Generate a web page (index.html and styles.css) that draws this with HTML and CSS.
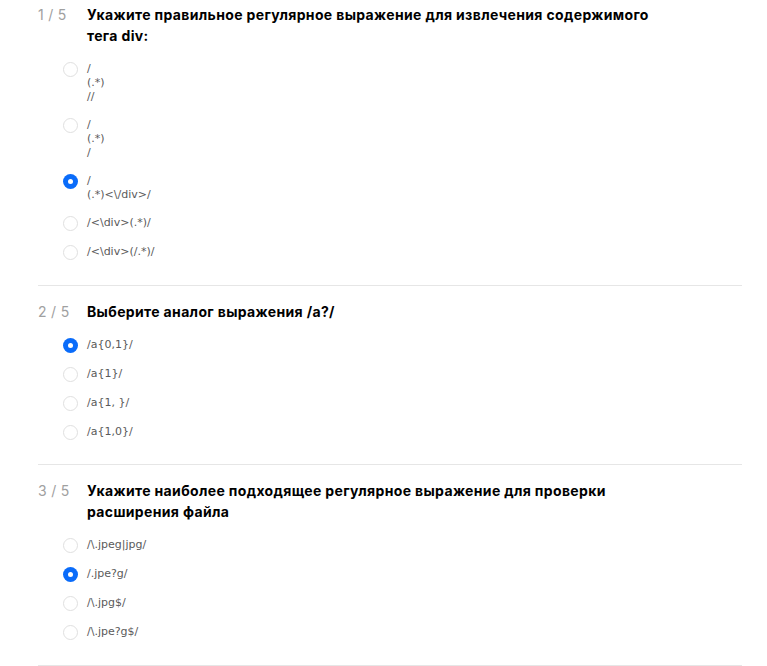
FILE: index.html
```html
<!DOCTYPE html>
<html lang="ru">
<head>
<meta charset="utf-8">
<link rel="stylesheet" href="styles.css">
</head>
<body>
<div class="quiz">
  <section class="question">
    <div class="head">
      <span class="num">1 / 5</span>
      <h2 class="title">Укажите правильное регулярное выражение для извлечения содержимого тега div:</h2>
    </div>
    <ul class="options">
      <li class="option"><span class="radio"></span><span class="label">/<br>(.*)<br>//</span></li>
      <li class="option"><span class="radio"></span><span class="label">/<br>(.*)<br>/</span></li>
      <li class="option"><span class="radio checked"></span><span class="label">/<br>(.*)&lt;\/div&gt;/</span></li>
      <li class="option"><span class="radio"></span><span class="label">/&lt;\div&gt;(.*)/</span></li>
      <li class="option"><span class="radio"></span><span class="label">/&lt;\div&gt;(/.*)/</span></li>
    </ul>
  </section>
  <section class="question">
    <div class="head">
      <span class="num">2 / 5</span>
      <h2 class="title">Выберите аналог выражения /a?/</h2>
    </div>
    <ul class="options">
      <li class="option"><span class="radio checked"></span><span class="label">/a{0,1}/</span></li>
      <li class="option"><span class="radio"></span><span class="label">/a{1}/</span></li>
      <li class="option"><span class="radio"></span><span class="label">/a{1, }/</span></li>
      <li class="option"><span class="radio"></span><span class="label">/a{1,0}/</span></li>
    </ul>
  </section>
  <section class="question">
    <div class="head">
      <span class="num">3 / 5</span>
      <h2 class="title">Укажите наиболее подходящее регулярное выражение для проверки расширения файла</h2>
    </div>
    <ul class="options">
      <li class="option"><span class="radio"></span><span class="label">/\.jpeg|jpg/</span></li>
      <li class="option"><span class="radio checked"></span><span class="label">/.jpe?g/</span></li>
      <li class="option"><span class="radio"></span><span class="label">/\.jpg$/</span></li>
      <li class="option"><span class="radio"></span><span class="label">/\.jpe?g$/</span></li>
    </ul>
  </section>
</div>
</body>
</html>
```

FILE: styles.css
```css
html, body {
  margin: 0;
  padding: 0;
  background: #ffffff;
}

body {
  font-family: Inter, "Noto Sans", sans-serif;
  color: #000;
}

.quiz {
  width: 704px;
  margin-left: 38px;
}

.question {
  padding: 15px 0 24.5px;
  border-bottom: 1px solid #e6e6e6;
}

.question:first-child {
  padding-top: 4px;
}

.head {
  display: flex;
  align-items: flex-start;
}

.num {
  flex: 0 0 49px;
  font-size: 14px;
  line-height: 21px;
  color: #a0a0a0;
  font-weight: 400;
  letter-spacing: 0.3px;
}

.title {
  margin: 0;
  width: 575px;
  font-size: 14px;
  line-height: 21px;
  font-weight: 700;
  letter-spacing: 0.35px;
  color: #000;
}

.options {
  list-style: none;
  margin: 16px 0 0;
  padding: 0 0 0 25px;
  display: flex;
  flex-direction: column;
  gap: 14px;
}

.option {
  display: flex;
  align-items: flex-start;
  gap: 9px;
}

.radio {
  flex: 0 0 auto;
  box-sizing: border-box;
  width: 15px;
  height: 15px;
  border-radius: 50%;
  border: 1px solid #e0e0e0;
  background: #fff;
  position: relative;
}

.radio.checked {
  border: none;
  background: #0a6cfa;
}

.radio.checked::after {
  content: "";
  position: absolute;
  left: 5px;
  top: 5px;
  width: 5px;
  height: 5px;
  border-radius: 50%;
  background: #fff;
}

.label {
  font-size: 11px;
  line-height: 14px;
  color: #5a5a5a;
  font-family: "DejaVu Sans", sans-serif;
  font-weight: 400;
}
```
